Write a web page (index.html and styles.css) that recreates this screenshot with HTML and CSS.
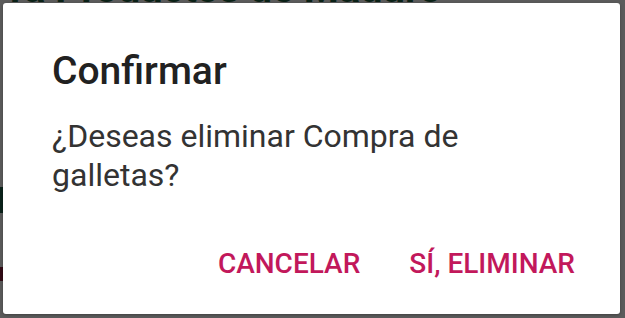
FILE: index.html
```html
<!DOCTYPE html>
<html lang="es">
<head>
<meta charset="utf-8">
<title>Confirmar</title>
<link rel="stylesheet" href="styles.css">
</head>
<body>
<div class="screen">
  <div class="app">
    <div class="app-title">ra Productos de Maduro</div>
    <div class="app-row row-green"></div>
    <div class="app-row row-red"></div>
  </div>
  <div class="scrim">
    <div class="dialog" role="dialog">
      <h2 class="dialog-title">Confirmar</h2>
      <p class="dialog-message">¿Deseas eliminar Compra de galletas?</p>
      <div class="dialog-actions">
        <button class="dialog-btn">CANCELAR</button>
        <button class="dialog-btn">SÍ, ELIMINAR</button>
      </div>
    </div>
  </div>
</div>
</body>
</html>
```
FILE: styles.css
```css
html, body {
  margin: 0;
  padding: 0;
}
body {
  width: 625px;
  height: 318px;
  overflow: hidden;
  background: #ffffff;
  font-family: Roboto, "Noto Sans", "Liberation Sans", sans-serif;
}
.screen {
  position: relative;
  width: 625px;
  height: 318px;
  overflow: hidden;
}
.app {
  display: flex;
  flex-direction: column;
}
.app-title {
  font-weight: 700;
  font-size: 40px;
  line-height: 40px;
  margin-top: -31px;
  padding-left: 10px;
  color: #1e5e3f;
  white-space: nowrap;
}
.app-row {
  width: 12px;
}
.row-green {
  margin-top: 178px;
  height: 26px;
  background: #1f5f4a;
}
.row-red {
  margin-top: 54px;
  height: 14px;
  background: #8a1f3c;
}
.scrim {
  position: absolute;
  inset: 0;
  background: rgba(0, 0, 0, 0.645);
  display: flex;
  padding: 3px 5px 4px 3px;
}
.dialog {
  flex: 1;
  background: #ffffff;
  border-radius: 3px;
  padding: 45px 45px 0 49px;
  display: flex;
  flex-direction: column;
  box-shadow: 0 1px 3px rgba(0, 0, 0, 0.3);
}
.dialog-title {
  margin: 0;
  font-size: 39px;
  line-height: 46px;
  font-weight: 500;
  color: #212121;
}
.dialog-message {
  margin: 23px 0 0 0;
  font-size: 32px;
  line-height: 39px;
  font-weight: 400;
  color: #333333;
  max-width: 440px;
}
.dialog-actions {
  margin-top: 51px;
  display: flex;
  justify-content: flex-end;
  gap: 49px;
}
.dialog-btn {
  border: 0;
  background: none;
  padding: 0;
  font-family: inherit;
  font-size: 28px;
  line-height: 36px;
  font-weight: 500;
  color: #c2185b;
}
```
